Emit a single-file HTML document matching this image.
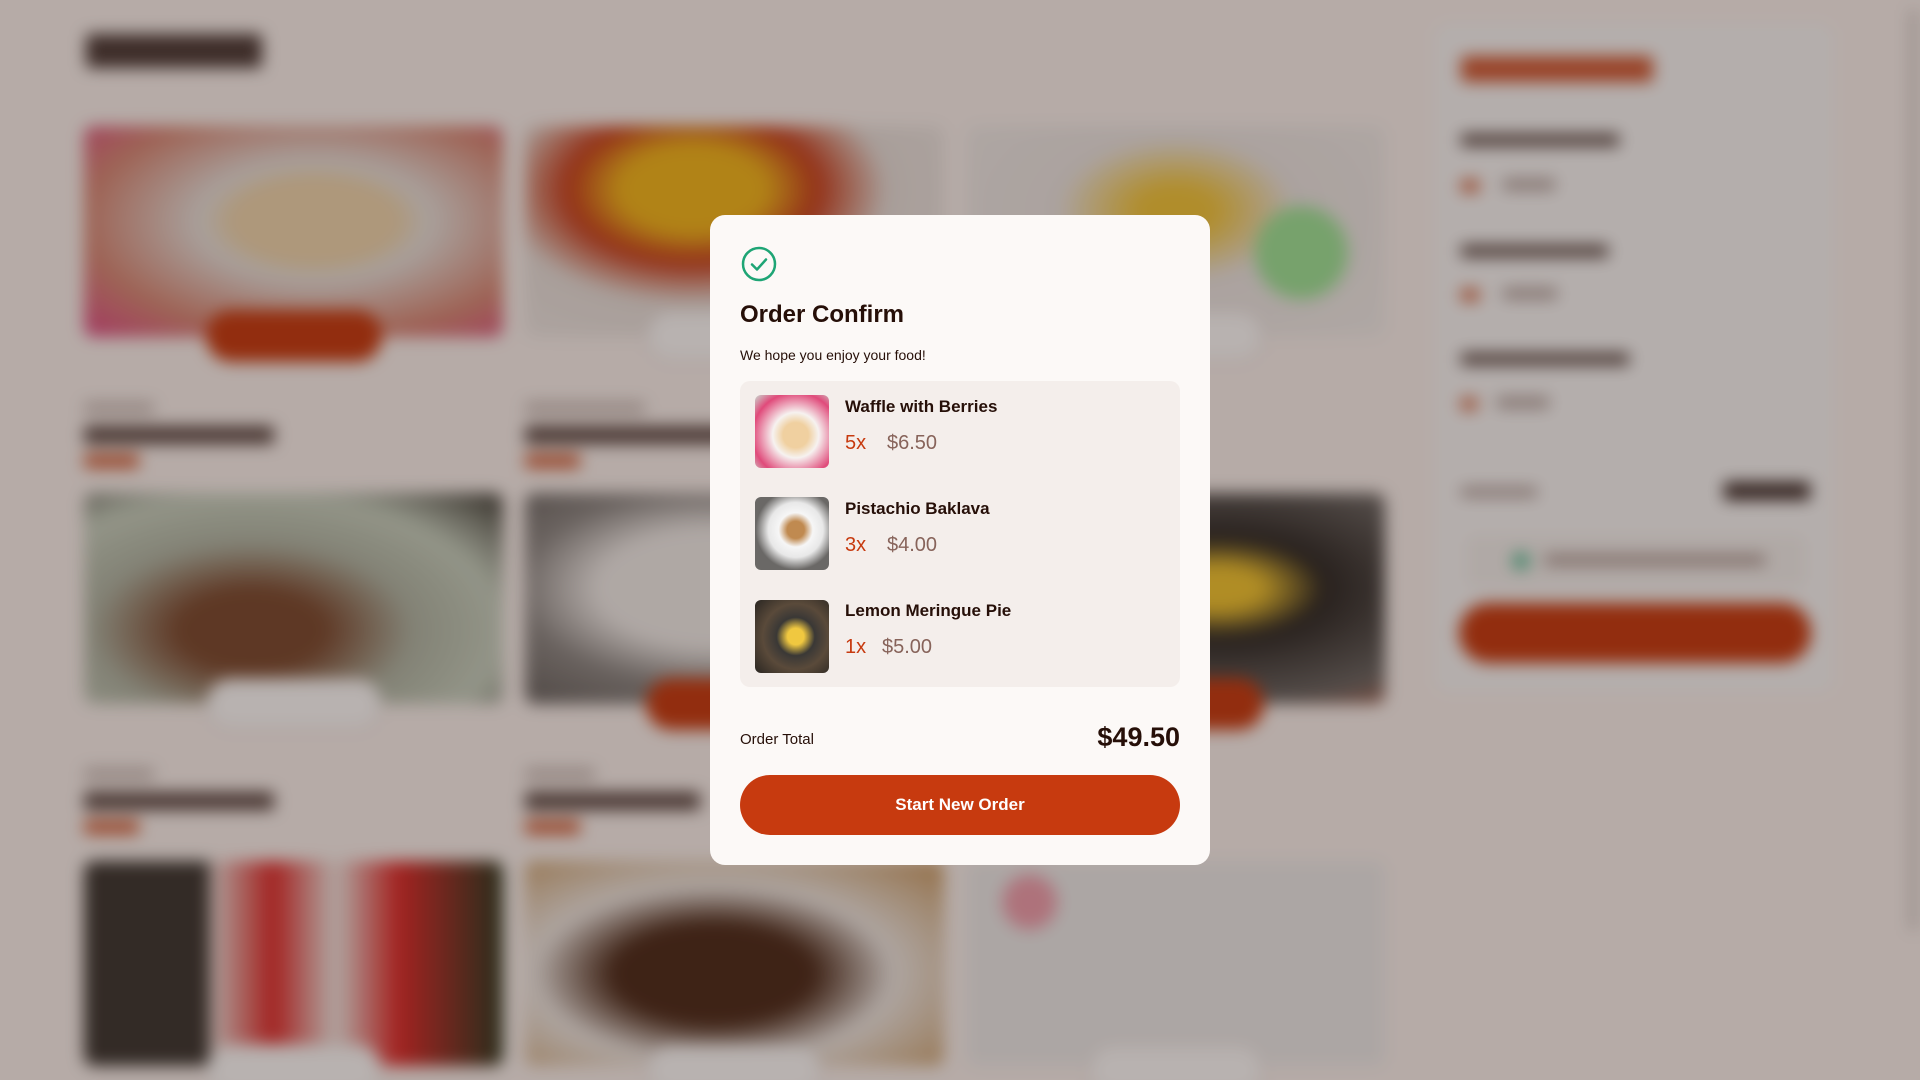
<!DOCTYPE html>
<html style="background:#aaa3a2"><head><meta charset="utf-8"><style>
*{box-sizing:border-box;margin:0;padding:0}
html,body{width:1920px;height:1080px;overflow:hidden}
body{background:#fcf5f2;font-family:"Liberation Sans",sans-serif;position:relative}
#wrap{position:absolute;left:-30px;top:-30px;width:1980px;height:1140px;background:#fcf5f2;filter:blur(8px)}
#page{position:absolute;left:30px;top:30px;width:1920px;height:1080px}
.ab{position:absolute}
.img{position:absolute;border-radius:10px;overflow:hidden}
.btn{position:absolute;width:176px;height:52px;border-radius:26px;background:#fff;border:1px solid #c9b7b2}
.btn.on{background:#c73a0f;border:none}
.cat{position:absolute;height:12px;width:70px;background:#c8bcb8;border-radius:3px}
.nm{position:absolute;height:18px;width:190px;background:#5a4844;border-radius:3px}
.pr{position:absolute;height:14px;width:55px;background:#d0603a;border-radius:3px}
#ov{position:absolute;inset:0;background:rgba(40,20,15,0.33)}
#modal{position:absolute;left:710px;top:215px;width:500px;height:650px;background:#fcf9f7;border-radius:15px}
.t{position:absolute;white-space:nowrap;color:#260f08}
.thumb{position:absolute;left:755px;width:74px;height:73px;border-radius:6px}
.iname{position:absolute;left:845px;font-weight:bold;font-size:17px;color:#260f08}
.q{position:absolute;left:845px;font-size:20px;color:#c73a0f}
.p{position:absolute;font-size:20px;color:#87635a}
</style></head><body>
<div id="wrap"><div id="page">
 <div class="ab" style="left:86px;top:34px;width:176px;height:34px;background:#4a3a37;border-radius:4px"></div>
 <div class="img" style="left:84px;top:126px;width:419px;height:211px;background:radial-gradient(ellipse at 55% 45%,#f0d8b0 0 25%,#e8e4e0 35%,#d88a78 70%,#e04a8a 100%)"></div>
 <div class="img" style="left:525px;top:126px;width:419px;height:211px;background:radial-gradient(ellipse at 40% 30%,#f5b91c 0 20%,#c8401e 35%,#e8e2de 55%,#f2eeec 100%)"></div>
 <div class="img" style="left:967px;top:126px;width:418px;height:211px;background:radial-gradient(circle at 80% 60%,#9ee89a 0 12%,transparent 14%),radial-gradient(ellipse at 50% 40%,#f4c83a 0 12%,#ece8e6 40%,#f2f0ee 100%)"></div>
 <div class="btn on" style="left:206px;top:310px"></div>
 <div class="btn" style="left:646px;top:310px"></div>
 <div class="btn" style="left:1088px;top:310px"></div>
 <div class="cat" style="left:84px;top:402px"></div><div class="nm" style="left:84px;top:426px"></div><div class="pr" style="left:84px;top:454px"></div>
 <div class="cat" style="left:525px;top:402px;width:120px"></div><div class="nm" style="left:525px;top:426px;width:230px"></div><div class="pr" style="left:525px;top:454px"></div>
 <div class="img" style="left:84px;top:493px;width:419px;height:211px;background:radial-gradient(ellipse at 40% 65%,#7a4a30 0 20%,#b0b8a8 45%,#c8d4c4 70%,#3a3a34 100%)"></div>
 <div class="img" style="left:525px;top:493px;width:419px;height:211px;background:radial-gradient(ellipse at 45% 45%,#f2f0ee 0 35%,#8a8886 60%,#5a5856 100%)"></div>
 <div class="img" style="left:967px;top:493px;width:418px;height:211px;background:radial-gradient(ellipse at 60% 45%,#f4c830 0 12%,#2a2826 30%,#6a6866 70%,#d86a4a 100%)"></div>
 <div class="btn" style="left:206px;top:678px"></div>
 <div class="btn on" style="left:646px;top:678px"></div>
 <div class="btn on" style="left:1088px;top:678px"></div>
 <div class="cat" style="left:84px;top:768px"></div><div class="nm" style="left:84px;top:792px"></div><div class="pr" style="left:84px;top:820px"></div>
 <div class="cat" style="left:525px;top:768px"></div><div class="nm" style="left:525px;top:792px;width:175px"></div><div class="pr" style="left:525px;top:820px"></div>
 <div class="img" style="left:84px;top:861px;width:419px;height:205px;background:linear-gradient(90deg,#3a3632 0 30%,#f0e8e4 30%,#e02a2a 45%,#f4ece8 60%,#e02a2a 75%,#2a3a22 100%)"></div>
 <div class="img" style="left:525px;top:861px;width:419px;height:205px;background:radial-gradient(ellipse at 45% 55%,#4a2a1a 0 30%,#f0ece8 55%,#c89a60 100%)"></div>
 <div class="img" style="left:967px;top:861px;width:418px;height:205px;background:radial-gradient(circle at 15% 20%,#f0a0b0 0 6%,transparent 8%),#eeeeee"></div>
 <div class="btn" style="left:206px;top:1044px"></div>
 <div class="btn" style="left:646px;top:1044px"></div>
 <div class="btn" style="left:1088px;top:1044px"></div>
 <div class="ab" style="left:1435px;top:24px;width:398px;height:668px;background:#fafafa;border-radius:12px"></div>
 <div class="ab" style="left:1461px;top:56px;width:192px;height:26px;background:#d05a34;border-radius:4px"></div>
 <div class="ab" style="left:1461px;top:134px;width:158px;height:12px;background:#5a4844"></div>
 <div class="ab" style="left:1461px;top:180px;width:18px;height:12px;background:#d0603a"></div><div class="ab" style="left:1503px;top:179px;width:52px;height:11px;background:#b0a09c"></div>
 <div class="ab" style="left:1461px;top:245px;width:147px;height:12px;background:#5a4844"></div>
 <div class="ab" style="left:1461px;top:289px;width:18px;height:12px;background:#d0603a"></div><div class="ab" style="left:1503px;top:288px;width:54px;height:11px;background:#b0a09c"></div>
 <div class="ab" style="left:1461px;top:353px;width:168px;height:12px;background:#5a4844"></div>
 <div class="ab" style="left:1461px;top:398px;width:16px;height:12px;background:#d0603a"></div><div class="ab" style="left:1497px;top:397px;width:52px;height:11px;background:#b0a09c"></div>
 <div class="ab" style="left:1461px;top:487px;width:76px;height:10px;background:#b0a09c"></div>
 <div class="ab" style="left:1724px;top:482px;width:86px;height:18px;background:#3a2a27"></div>
 <div class="ab" style="left:1466px;top:535px;width:340px;height:52px;background:#f4f2f0;border-radius:8px"></div>
 <div class="ab" style="left:1512px;top:552px;width:18px;height:18px;background:#5ac09a;border-radius:50%"></div>
 <div class="ab" style="left:1545px;top:555px;width:220px;height:10px;background:#a8948f"></div>
 <div class="ab" style="left:1459px;top:603px;width:352px;height:60px;background:#c73a0f;border-radius:30px"></div>
 <div class="ab" style="left:1912px;top:10px;width:3px;height:920px;background:#8a8482"></div>
</div></div>
<div id="ov"></div>
<div id="modal"></div>
<svg class="ab" style="left:741px;top:246px" width="36" height="36" viewBox="0 0 36 36"><circle cx="18" cy="18" r="16" fill="none" stroke="#1ea575" stroke-width="2.5"/><path d="M11 18.5l5 5 9-10" fill="none" stroke="#1ea575" stroke-width="2.5" stroke-linecap="round" stroke-linejoin="round"/></svg>
<div class="t" style="left:740px;top:301px;font-size:24px;font-weight:bold">Order Confirm</div>
<div class="t" style="left:740px;top:347px;font-size:14px">We hope you enjoy your food!</div>
<div class="ab" style="left:740px;top:381px;width:440px;height:306px;background:#f4eeeb;border-radius:10px"></div>
<div class="thumb" style="top:395px;background:radial-gradient(ellipse at 55% 55%,#f0d0a0 0 22%,#f6f2f0 40%,#e04a7a 75%,#c8d8d0 100%)"></div>
<div class="iname" style="top:397px">Waffle with Berries</div>
<div class="q" style="top:432px">5x</div><div class="p" style="left:887px;top:432px">$6.50</div>
<div class="thumb" style="top:497px;background:radial-gradient(circle at 55% 45%,#c08a50 0 15%,#f6f6f6 30%,#e8e8e8 48%,#6a6866 70%)"></div>
<div class="iname" style="top:499px">Pistachio Baklava</div>
<div class="q" style="top:534px">3x</div><div class="p" style="left:887px;top:534px">$4.00</div>
<div class="thumb" style="top:600px;background:radial-gradient(circle at 55% 50%,#f0c840 0 15%,#3a3836 35%,#5a4a3a 60%,#2a2622 100%)"></div>
<div class="iname" style="top:601px">Lemon Meringue Pie</div>
<div class="q" style="top:636px">1x</div><div class="p" style="left:882px;top:636px">$5.00</div>
<div class="t" style="left:740px;top:731px;font-size:15px">Order Total</div>
<div class="t" style="right:740px;top:722px;font-size:27px;font-weight:bold">$49.50</div>
<div class="ab" style="left:740px;top:775px;width:440px;height:60px;background:#c73a0f;border-radius:30px;color:#fff;font-weight:bold;font-size:17px;text-align:center;line-height:60px">Start New Order</div>
</body></html>
